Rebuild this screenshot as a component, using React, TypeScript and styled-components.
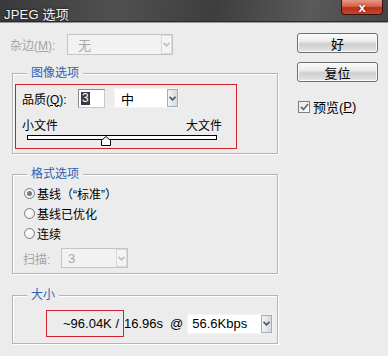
import React from "react";
import styled, { createGlobalStyle } from "styled-components";

const GlobalStyle = createGlobalStyle`
  html, body {
    margin: 0;
    padding: 0;
    background: #ececec;
  }
  body {
    font-family: "Liberation Sans", "Noto Sans CJK SC", sans-serif;
    font-size: 12px;
    color: #000;
  }
`;

const Chevron = ({ color = "#4a5c74" }: { color?: string }) => (
  <svg width="7" height="5" viewBox="0 0 7 5">
    <path d="M0.5 0.8 L3.5 3.8 L6.5 0.8" fill="none" stroke={color} strokeWidth="1.8" />
  </svg>
);

const Window = styled.div`
  width: 388px;
  height: 356px;
  display: flex;
  flex-direction: column;
  overflow: hidden;
  background: #ececec;
`;

const TitleBar = styled.div`
  height: 21px;
  flex: none;
  display: flex;
  align-items: flex-start;
  background: linear-gradient(100deg, #3a3a3a 0%, #505050 30%, #3e3e3e 55%, #5a5a5a 80%, #444 100%);
  border-bottom: 1px solid #2a2a2a;
  box-shadow: 0 1px 0 #9a9a9a;
`;

const Title = styled.span`
  margin: 4px 0 0 4px;
  color: #f4f4f4;
  font-size: 13px;
  letter-spacing: 0.2px;
  text-shadow: 0 0 3px #000;
`;

const CloseButton = styled.div`
  margin-left: auto;
  margin-right: 5px;
  width: 42px;
  height: 15px;
  box-sizing: border-box;
  border: 1px solid #3a1410;
  border-top: none;
  border-radius: 0 0 4px 4px;
  background: linear-gradient(#e49a86 0%, #d4624a 45%, #b8301a 55%, #c8452a 100%);
  display: flex;
  align-items: center;
  justify-content: center;
  color: #fff;
  font-weight: bold;
  font-size: 13px;
  line-height: 1;
  text-shadow: 0 0 2px #501000;
`;

const Content = styled.div`
  display: flex;
  padding: 12px 10px 0 12px;
`;

const LeftColumn = styled.div`
  width: 266px;
  display: flex;
  flex-direction: column;
`;

const RightColumn = styled.div`
  width: 81px;
  margin-left: 19px;
  display: flex;
  flex-direction: column;
`;

const MatteRow = styled.div`
  height: 21px;
  margin-left: -2px;
  display: flex;
  align-items: center;
`;

const Label = styled.span<{ $width?: number; $disabled?: boolean }>`
  width: ${(p) => (p.$width ? `${p.$width}px` : "auto")};
  flex: none;
  color: ${(p) => (p.$disabled ? "#a4a4a4" : "#000")};
  white-space: nowrap;
`;

const Select = styled.div<{ $width: number; $height: number; $disabled?: boolean }>`
  width: ${(p) => p.$width}px;
  height: ${(p) => p.$height}px;
  box-sizing: border-box;
  display: flex;
  align-items: stretch;
  background: ${(p) => (p.$disabled ? "#f2f2f2" : "#fff")};
  border: 1px solid ${(p) => (p.$disabled ? "#c4c4c4" : "#f4f4f4")};
  color: ${(p) => (p.$disabled ? "#a8a8a8" : "#000")};
`;

const SelectValue = styled.span<{ $indent: number }>`
  flex: 1;
  display: flex;
  align-items: center;
  padding-left: ${(p) => p.$indent}px;
  font-size: 13px;
`;

const ArrowButton = styled.span<{ $disabled?: boolean }>`
  width: 11px;
  flex: none;
  box-sizing: border-box;
  display: flex;
  align-items: center;
  justify-content: center;
  border: 1px solid ${(p) => (p.$disabled ? "#dadada" : "#a6adb6")};
  background: ${(p) =>
    p.$disabled ? "#f4f4f4" : "linear-gradient(90deg, #f4f4f4, #d6d8da)"};
`;

const Group = styled.div<{ $height: number; $top: number }>`
  position: relative;
  margin-top: ${(p) => p.$top}px;
  height: ${(p) => p.$height}px;
  box-sizing: border-box;
  border: 1px solid #b4b4b4;
  box-shadow: inset 1px 1px 0 #fff, 1px 1px 0 #fff;
`;

const Legend = styled.span`
  position: absolute;
  left: 14px;
  top: -8px;
  padding: 0 4px;
  background: #ececec;
  color: #2f62b0;
  font-size: 12px;
  line-height: 14px;
`;

const Highlight = styled.div<{ $width: number; $height: number }>`
  width: ${(p) => p.$width}px;
  height: ${(p) => p.$height}px;
  box-sizing: border-box;
  border: 1px solid #d2222e;
  flex: none;
`;

const QualityFrame = styled.div`
  margin: 10px 0 0 2px;
`;

const QualityContent = styled.div`
  padding: 3px 14px 0 6px;
  display: flex;
  flex-direction: column;
`;

const QualityRow = styled.div`
  height: 20px;
  display: flex;
  align-items: center;
`;

const NumberInput = styled.div`
  width: 27px;
  height: 19px;
  box-sizing: border-box;
  margin-right: 9px;
  border: 1px solid #8a8a8a;
  border-right-color: #c8c8c8;
  border-bottom-color: #c8c8c8;
  background: #fff;
  padding: 1px 0 0 2px;
`;

const SelectedText = styled.span`
  display: inline-block;
  background: #3a3a3a;
  color: #fff;
  font-size: 12px;
  line-height: 13px;
  padding: 0 1px;
`;

const SizeLabels = styled.div`
  margin-top: 12px;
  display: flex;
  justify-content: space-between;
  line-height: 13px;
`;

const Track = styled.div`
  position: relative;
  margin: 2px 0 0 5px;
  width: 190px;
  height: 5px;
  box-sizing: border-box;
  border: 1px solid #000;
  background: #fff;
`;

const Thumb = styled.svg`
  position: absolute;
  left: 73px;
  top: 0px;
`;

const RadioList = styled.div`
  padding: 8px 0 0 11px;
  display: flex;
  flex-direction: column;
`;

const RadioRow = styled.div`
  height: 20px;
  display: flex;
  align-items: center;
`;

const RadioCircle = styled.span<{ $checked?: boolean }>`
  width: 11px;
  height: 11px;
  box-sizing: border-box;
  margin-right: 2px;
  border-radius: 50%;
  border: 1px solid #7e7e7e;
  background: radial-gradient(circle at 40% 40%, #fff 0%, #f0f0f0 60%, #d8d8d8 100%);
  display: flex;
  align-items: center;
  justify-content: center;
  &::after {
    content: "";
    width: 5px;
    height: 5px;
    border-radius: 50%;
    background: ${(p) => (p.$checked ? "#7a7a7a" : "transparent")};
  }
`;

const ScanRow = styled.div`
  margin: 5px 0 0 10px;
  height: 20px;
  display: flex;
  align-items: center;
`;

const SizeRow = styled.div`
  margin: 14px 0 0 33px;
  display: flex;
  align-items: center;
  font-size: 13px;
`;

const SizeValue = styled.div`
  height: 100%;
  display: flex;
  align-items: center;
  padding-left: 16px;
`;

const Spacer = styled.span<{ $width: number }>`
  display: inline-block;
  width: ${(p) => p.$width}px;
`;

const Button = styled.div<{ $top: number }>`
  height: 20px;
  margin-top: ${(p) => p.$top}px;
  box-sizing: border-box;
  border: 1px solid #6e6e6e;
  border-radius: 3px;
  background: linear-gradient(#fbfbfb 0%, #ececec 40%, #cfcfcf 55%, #dcdcdc 85%, #ebebeb 100%);
  box-shadow: inset 0 0 0 1px #fafafa;
  display: flex;
  align-items: center;
  justify-content: center;
  font-size: 13px;
`;

const PreviewRow = styled.div`
  margin-top: 15px;
  margin-left: 1px;
  display: flex;
  align-items: center;
  font-size: 13px;
`;

const CheckBox = styled.span`
  width: 12px;
  height: 12px;
  box-sizing: border-box;
  margin-right: 3px;
  border: 1px solid #7e7e7e;
  background: linear-gradient(135deg, #e8e8e8, #fff);
  display: flex;
  align-items: center;
  justify-content: center;
`;

const U = styled.span`
  text-decoration: underline;
`;

export default function App() {
  return (
    <Window>
      <GlobalStyle />
      <TitleBar>
        <Title>JPEG 选项</Title>
        <CloseButton>x</CloseButton>
      </TitleBar>
      <Content>
        <LeftColumn>
          <MatteRow>
            <Label $width={57} $disabled>
              杂边(<U>M</U>):
            </Label>
            <Select $width={106} $height={21} $disabled>
              <SelectValue $indent={10}>无</SelectValue>
              <ArrowButton $disabled>
                <Chevron color="#b8c2cc" />
              </ArrowButton>
            </Select>
          </MatteRow>

          <Group $top={18} $height={81}>
            <Legend>图像选项</Legend>
            <QualityFrame>
              <Highlight $width={222} $height={65}>
                <QualityContent>
                  <QualityRow>
                    <Label $width={56}>
                      品质(<U>Q</U>):
                    </Label>
                    <NumberInput>
                      <SelectedText>3</SelectedText>
                    </NumberInput>
                    <Select $width={65} $height={20}>
                      <SelectValue $indent={6}>中</SelectValue>
                      <ArrowButton>
                        <Chevron />
                      </ArrowButton>
                    </Select>
                  </QualityRow>
                  <SizeLabels>
                    <span>小文件</span>
                    <span>大文件</span>
                  </SizeLabels>
                  <Track>
                    <Thumb width="10" height="10" viewBox="0 0 10 10">
                      <path
                        d="M0.5 4.5 L5 0.5 L9.5 4.5 L9.5 9.5 L0.5 9.5 Z"
                        fill="#fff"
                        stroke="#000"
                        strokeWidth="1"
                      />
                    </Thumb>
                  </Track>
                </QualityContent>
              </Highlight>
            </QualityFrame>
          </Group>

          <Group $top={20} $height={100}>
            <Legend>格式选项</Legend>
            <RadioList>
              <RadioRow>
                <RadioCircle $checked />
                基线（“标准”）
              </RadioRow>
              <RadioRow>
                <RadioCircle />
                基线已优化
              </RadioRow>
              <RadioRow>
                <RadioCircle />
                连续
              </RadioRow>
            </RadioList>
            <ScanRow>
              <Label $width={38} $disabled>
                扫描:
              </Label>
              <Select $width={67} $height={20} $disabled>
                <SelectValue $indent={6}>3</SelectValue>
                <ArrowButton $disabled>
                  <Chevron color="#b8c2cc" />
                </ArrowButton>
              </Select>
            </ScanRow>
          </Group>

          <Group $top={21} $height={49}>
            <Legend>大小</Legend>
            <SizeRow>
              <Highlight $width={78} $height={27}>
                <SizeValue>~96.04K /</SizeValue>
              </Highlight>
              <span>16.96s</span>
              <Spacer $width={7} />
              <span>@</span>
              <Spacer $width={4} />
              <Select $width={86} $height={20}>
                <SelectValue $indent={4}>56.6Kbps</SelectValue>
                <ArrowButton>
                  <Chevron />
                </ArrowButton>
              </Select>
            </SizeRow>
          </Group>
        </LeftColumn>

        <RightColumn>
          <Button $top={-1}>好</Button>
          <Button $top={9}>复位</Button>
          <PreviewRow>
            <CheckBox>
              <svg width="9" height="8" viewBox="0 0 9 8">
                <path d="M1 4 L3.5 6.5 L8 1" fill="none" stroke="#6c6c6c" strokeWidth="1.8" />
              </svg>
            </CheckBox>
            预览(<U>P</U>)
          </PreviewRow>
        </RightColumn>
      </Content>
    </Window>
  );
}
